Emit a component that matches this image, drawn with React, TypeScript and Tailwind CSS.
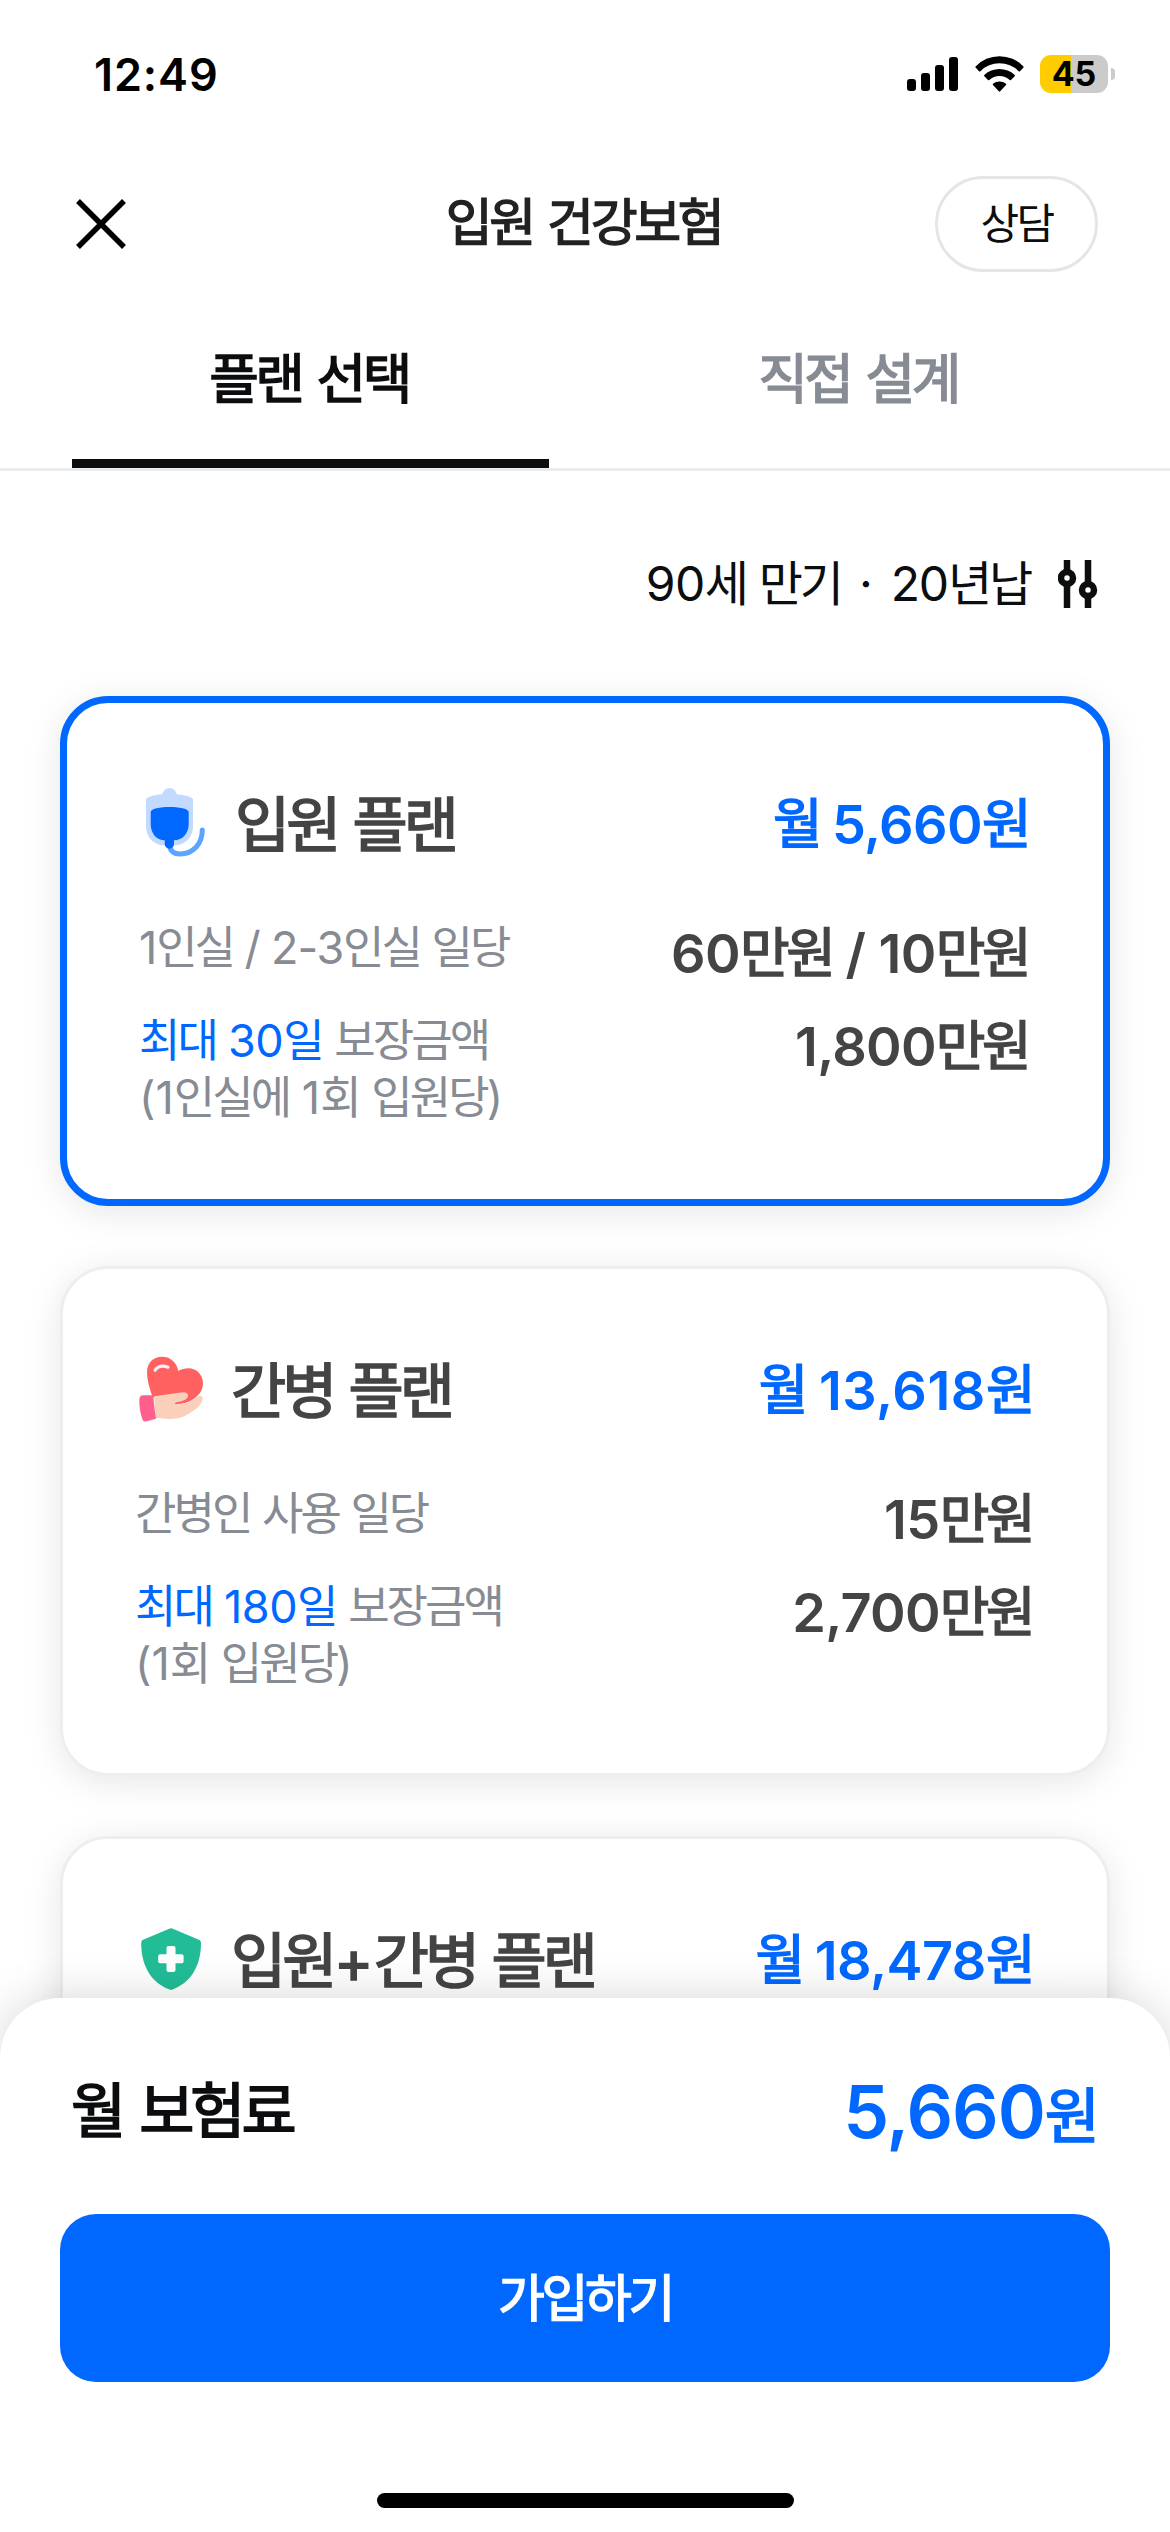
import React from "react";
import { clsx } from "clsx";

type TextProps = {
  children: string;
  className?: string;
  strong?: boolean;
};

// Hangul sits tighter than the digits around it, and its medium weight
// is a regular cut with a thin outline.
const Text = ({ children, className, strong }: TextProps) => (
  <span className={className}>
    {children.split(/([가-힣]+)/).map((part, i) =>
      i % 2 === 1 ? (
        <span
          key={i}
          className={
            strong
              ? "font-normal tracking-[-0.066em] [-webkit-text-stroke:0.028em]"
              : "tracking-[-0.065em]"
          }
        >
          {part}
        </span>
      ) : (
        part
      )
    )}
  </span>
);

const SignalIcon = () => (
  <svg width="51" height="34" viewBox="0 0 51 34">
    <rect x="0" y="22" width="9" height="12" rx="3" />
    <rect x="14" y="16" width="9" height="18" rx="3" />
    <rect x="28" y="8" width="9" height="26" rx="3" />
    <rect x="42" y="0" width="9" height="34" rx="3" />
  </svg>
);

const WifiIcon = () => (
  <svg width="49" height="36" viewBox="0 0 49 36">
    <path d="M0.6 10.4A33 33 0 0 1 48.4 10.4Q49 11 48.4 11.6L45 15.2Q44.3 15.8 43.6 15.2A27 27 0 0 0 5.4 15.2Q4.7 15.8 4 15.2L0.6 11.6Q0 11 0.6 10.4Z" />
    <path d="M9.3 19A22.5 22.5 0 0 1 39.7 19Q40.3 19.6 39.7 20.2L36 23.9Q35.4 24.4 34.7 23.9A15.5 15.5 0 0 0 14.3 23.9Q13.6 24.4 13 23.9L9.3 20.2Q8.7 19.6 9.3 19Z" />
    <path d="M18 27.8A10 10 0 0 1 31 27.8Q31.6 28.4 31 29L25.2 35.3Q24.5 36 23.8 35.3L18 29Q17.4 28.4 18 27.8Z" />
  </svg>
);

const CloseIcon = () => (
  <svg width="52" height="52" viewBox="0 0 52 52" stroke="#000" strokeWidth="5.5">
    <path d="M3 3L49 49M49 3L3 49" />
  </svg>
);

const SlidersIcon = () => (
  <svg width="40" height="48" viewBox="0 0 40 48" fill="none" stroke="#0b0d0f" strokeWidth="6.5">
    <path d="M9 0V12M9 24V48M30 0V24M30 36V48" />
    <circle cx="9" cy="18" r="6" />
    <circle cx="30" cy="30" r="6" />
  </svg>
);

const DripIcon = () => (
  <svg width="72" height="72" viewBox="0 0 72 72">
    <circle cx="30.5" cy="8.3" r="7.2" fill="#c2daff" />
    <path
      d="M7 12.5C7 10.5 14 7 30.5 7S54 10.5 54 12.5V39C54 51 46 58.5 34 58.5H27C15 58.5 7 51 7 39Z"
      fill="#c2daff"
    />
    <path
      d="M30.5 59C31.5 64.5 35.5 67 41 67C54 67 63.3 57 63.3 43"
      fill="none"
      stroke="#5ca4ff"
      strokeWidth="5"
      strokeLinecap="round"
    />
    <path
      d="M11.7 25C11.7 22.5 18 20 30.5 20S49.7 22.5 49.7 25V37C49.7 46.5 43.5 53.3 35 53.3V57A4.65 4.65 0 0 1 25.7 57V53.3C17.5 53.3 11.7 46.5 11.7 37Z"
      fill="#0068ff"
    />
  </svg>
);

const HeartHandIcon = () => (
  <svg width="72" height="72" viewBox="0 0 72 72">
    <path
      d="M17.5 44C14.5 35 12 27 12 19.7C12 10 18 3.7 27 3.7C36 3.7 42 10 43.3 18C46 16 50 15.2 53.3 15.2C62 15.2 68 22 68 30.3C68 40 60 47 50 50L38 52Z"
      fill="#ff6060"
    />
    <path d="M20 17.2Q24.5 11 33 14.2" fill="none" stroke="#f3f1f2" strokeWidth="3.2" strokeLinecap="round" />
    <path
      d="M19 43.3L48 39.3C51 38.9 53 40.5 53 42.5C53 46 49 48 41.5 49.3C39.5 49.8 39.5 51.5 41.5 51.5C50 51.3 57 48.5 61.5 44.5C64 42.5 68 42 67.8 45.5C67 51 62 56 55.5 59.5C51 62.5 45 66 35 66C28 66 23 65 20.5 65Z"
      fill="#fbd0bb"
    />
    <path
      d="M8.5 42.3H18.2C18.7 50 19.8 58 21 65.7L11 68.4C9 68.9 8 68 7.3 66C5 60 4.3 53 4.3 47C4.3 44 5.5 42.3 8.5 42.3Z"
      fill="#ff5f8c"
    />
  </svg>
);

const ShieldIcon = () => (
  <svg width="72" height="72" viewBox="0 0 72 72">
    <path
      d="M34.8 5.5Q36 4.8 37.2 5.5L64.5 17Q66 17.8 66 20C66 45 54 60.5 37.5 66.5Q36 67.2 34.5 66.5C18 60.5 6.2 45 6.2 20Q6.2 17.8 7.5 17Z"
      fill="#22bd97"
    />
    <rect x="31.5" y="23" width="9" height="26" rx="2" fill="#fff" />
    <rect x="23.2" y="31.3" width="25.4" height="9" rx="2" fill="#fff" />
  </svg>
);

type PlanDetail = {
  dailyLabel: string;
  dailyValue: string;
  maxDays: string;
  maxNote: string;
  maxValue: string;
};

type Plan = {
  name: string;
  price: string;
  priceClass: string;
  icon: React.ReactNode;
  selected?: boolean;
  detail?: PlanDetail;
};

const plans: Plan[] = [
  {
    name: "입원 플랜",
    price: "월 5,660원",
    priceClass: "tracking-[-0.012em]",
    icon: <DripIcon />,
    selected: true,
    detail: {
      dailyLabel: "1인실 / 2-3인실 일당",
      dailyValue: "60만원 / 10만원",
      maxDays: "최대 30일",
      maxNote: "(1인실에 1회 입원당)",
      maxValue: "1,800만원",
    },
  },
  {
    name: "간병 플랜",
    price: "월 13,618원",
    priceClass: "tracking-[0.01em]",
    icon: <HeartHandIcon />,
    detail: {
      dailyLabel: "간병인 사용 일당",
      dailyValue: "15만원",
      maxDays: "최대 180일",
      maxNote: "(1회 입원당)",
      maxValue: "2,700만원",
    },
  },
  {
    name: "입원+간병 플랜",
    price: "월 18,478원",
    priceClass: "tracking-[-0.01em]",
    icon: <ShieldIcon />,
  },
];

const PlanDetails = ({ detail }: { detail: PlanDetail }) => (
  <>
    <div className="mt-[48px] flex items-start justify-between text-[#868b94]">
      <Text className="text-[45px] leading-[57px] tracking-[-0.026em]">{detail.dailyLabel}</Text>
      <Text strong className="pr-[3px] text-[54px] leading-[69px] font-semibold tracking-[-0.01em] text-[#444444]">
        {detail.dailyValue}
      </Text>
    </div>
    <div className="mt-[24px] flex items-start justify-between text-[#868b94]">
      <p className="text-[45px] leading-[57px]">
        <Text className="tracking-[-0.012em] text-[#0068ff]">{detail.maxDays}</Text> <Text>보장금액</Text>
        <br />
        <Text>{detail.maxNote}</Text>
      </p>
      <Text strong className="pr-[3px] text-[54px] leading-[69px] font-semibold tracking-[-0.014em] text-[#444444]">
        {detail.maxValue}
      </Text>
    </div>
  </>
);

const PlanCard = ({ plan }: { plan: Plan }) => (
  <section
    className={clsx(
      "h-[510px] shrink-0 rounded-[48px] bg-white p-[72px] shadow-[0_6px_36px_rgba(0,0,0,0.1)]",
      plan.selected ? "border-[7px] border-[#0068ff]" : "border-[3px] border-[#eeeeee]"
    )}
  >
    <div className="flex h-[96px] items-center justify-between">
      <div className="flex items-center gap-[24px]">
        {plan.icon}
        <Text strong className="pt-[3px] text-[60px] leading-none font-semibold text-[#444444]">
          {plan.name}
        </Text>
      </div>
      <Text
        strong
        className={clsx("pt-[4px] pr-[3px] text-[54px] leading-none font-semibold text-[#0068ff]", plan.priceClass)}
      >
        {plan.price}
      </Text>
    </div>
    {plan.detail && <PlanDetails detail={plan.detail} />}
  </section>
);

const App = () => {
  return (
    <div className="relative flex h-[2532px] w-[1170px] flex-col overflow-hidden bg-white font-['Inter','Noto_Sans_CJK_KR',sans-serif] whitespace-nowrap text-[#0b0d0f]">
      <div className="flex h-[148px] shrink-0 items-center justify-between pr-[55px] pl-[94px]">
        <span className="text-[45px] leading-none font-semibold tracking-[0.02em] text-black">12:49</span>
        <div className="flex items-center">
          <SignalIcon />
          <div className="ml-[17px]">
            <WifiIcon />
          </div>
          <div className="ml-[16px] flex h-[38px] w-[68px] items-center justify-center rounded-[11px] bg-linear-to-r from-[#ffcc00] from-46% to-[#cbcbcb] to-46% text-[34px] leading-none font-bold text-black">
            45
          </div>
          <div className="ml-[3px] h-[12px] w-[4px] rounded-r-full bg-[#cbcbcb]" />
        </div>
      </div>

      <header className="grid h-[152px] shrink-0 grid-cols-[1fr_auto_1fr] items-center px-[72px]">
        <button aria-label="닫기" className="ml-[3px] justify-self-start">
          <CloseIcon />
        </button>
        <h1 className="pr-[3px] pb-[4px] text-[51px] leading-none text-[#222222]">
          <Text strong>입원 건강보험</Text>
        </h1>
        <button className="h-[96px] w-[163px] justify-self-end rounded-[48px] border-[3px] border-[#e4e5e7] text-[42px] leading-none">
          <Text>상담</Text>
        </button>
      </header>

      <nav className="flex h-[171px] shrink-0 items-stretch gap-[72px] border-b-[3px] border-[#e8ecef] px-[72px] text-[54px] leading-none">
        <button className="flex flex-1 items-center justify-center border-b-[9px] border-[#0b0d0f] pr-[3px]">
          <Text strong>플랜 선택</Text>
        </button>
        <button className="flex flex-1 items-center justify-center border-b-[9px] border-transparent pr-[3px] text-[#868b94]">
          <Text strong>직접 설계</Text>
        </button>
      </nav>

      <main className="flex flex-1 flex-col px-[60px]">
        <div className="flex h-[225px] shrink-0 items-center justify-end pr-[12px] text-[48px] leading-none">
          <Text className="tracking-[-0.01em]">90세 만기</Text>
          <span className="mx-[18px]">·</span>
          <Text className="mr-[28px] tracking-[-0.025em]">20년납</Text>
          <SlidersIcon />
        </div>
        <div className="flex flex-col gap-[60px]">
          {plans.map((plan) => (
            <PlanCard key={plan.name} plan={plan} />
          ))}
        </div>
      </main>

      <footer className="absolute inset-x-0 bottom-0 flex h-[534px] flex-col rounded-t-[60px] bg-white px-[60px] shadow-[0_0_48px_rgba(0,0,0,0.16)]">
        <div className="flex h-[216px] items-center justify-between px-[12px] pt-[10px]">
          <Text strong className="-ml-[1px] text-[60px] leading-none">
            월 보험료
          </Text>
          <div className="flex items-baseline pr-[2px] leading-none font-semibold text-[#0068ff]">
            <span className="text-[73px] tracking-[-0.015em]">5,660</span>
            <Text strong className="text-[60px]">
              원
            </Text>
          </div>
        </div>
        <button className="h-[168px] rounded-[36px] bg-[#0068ff] text-[51px] leading-none text-white">
          <Text strong>가입하기</Text>
        </button>
        <div className="mt-auto mb-[24px] h-[15px] w-[417px] self-center rounded-full bg-black" />
      </footer>
    </div>
  );
};

export default App;
